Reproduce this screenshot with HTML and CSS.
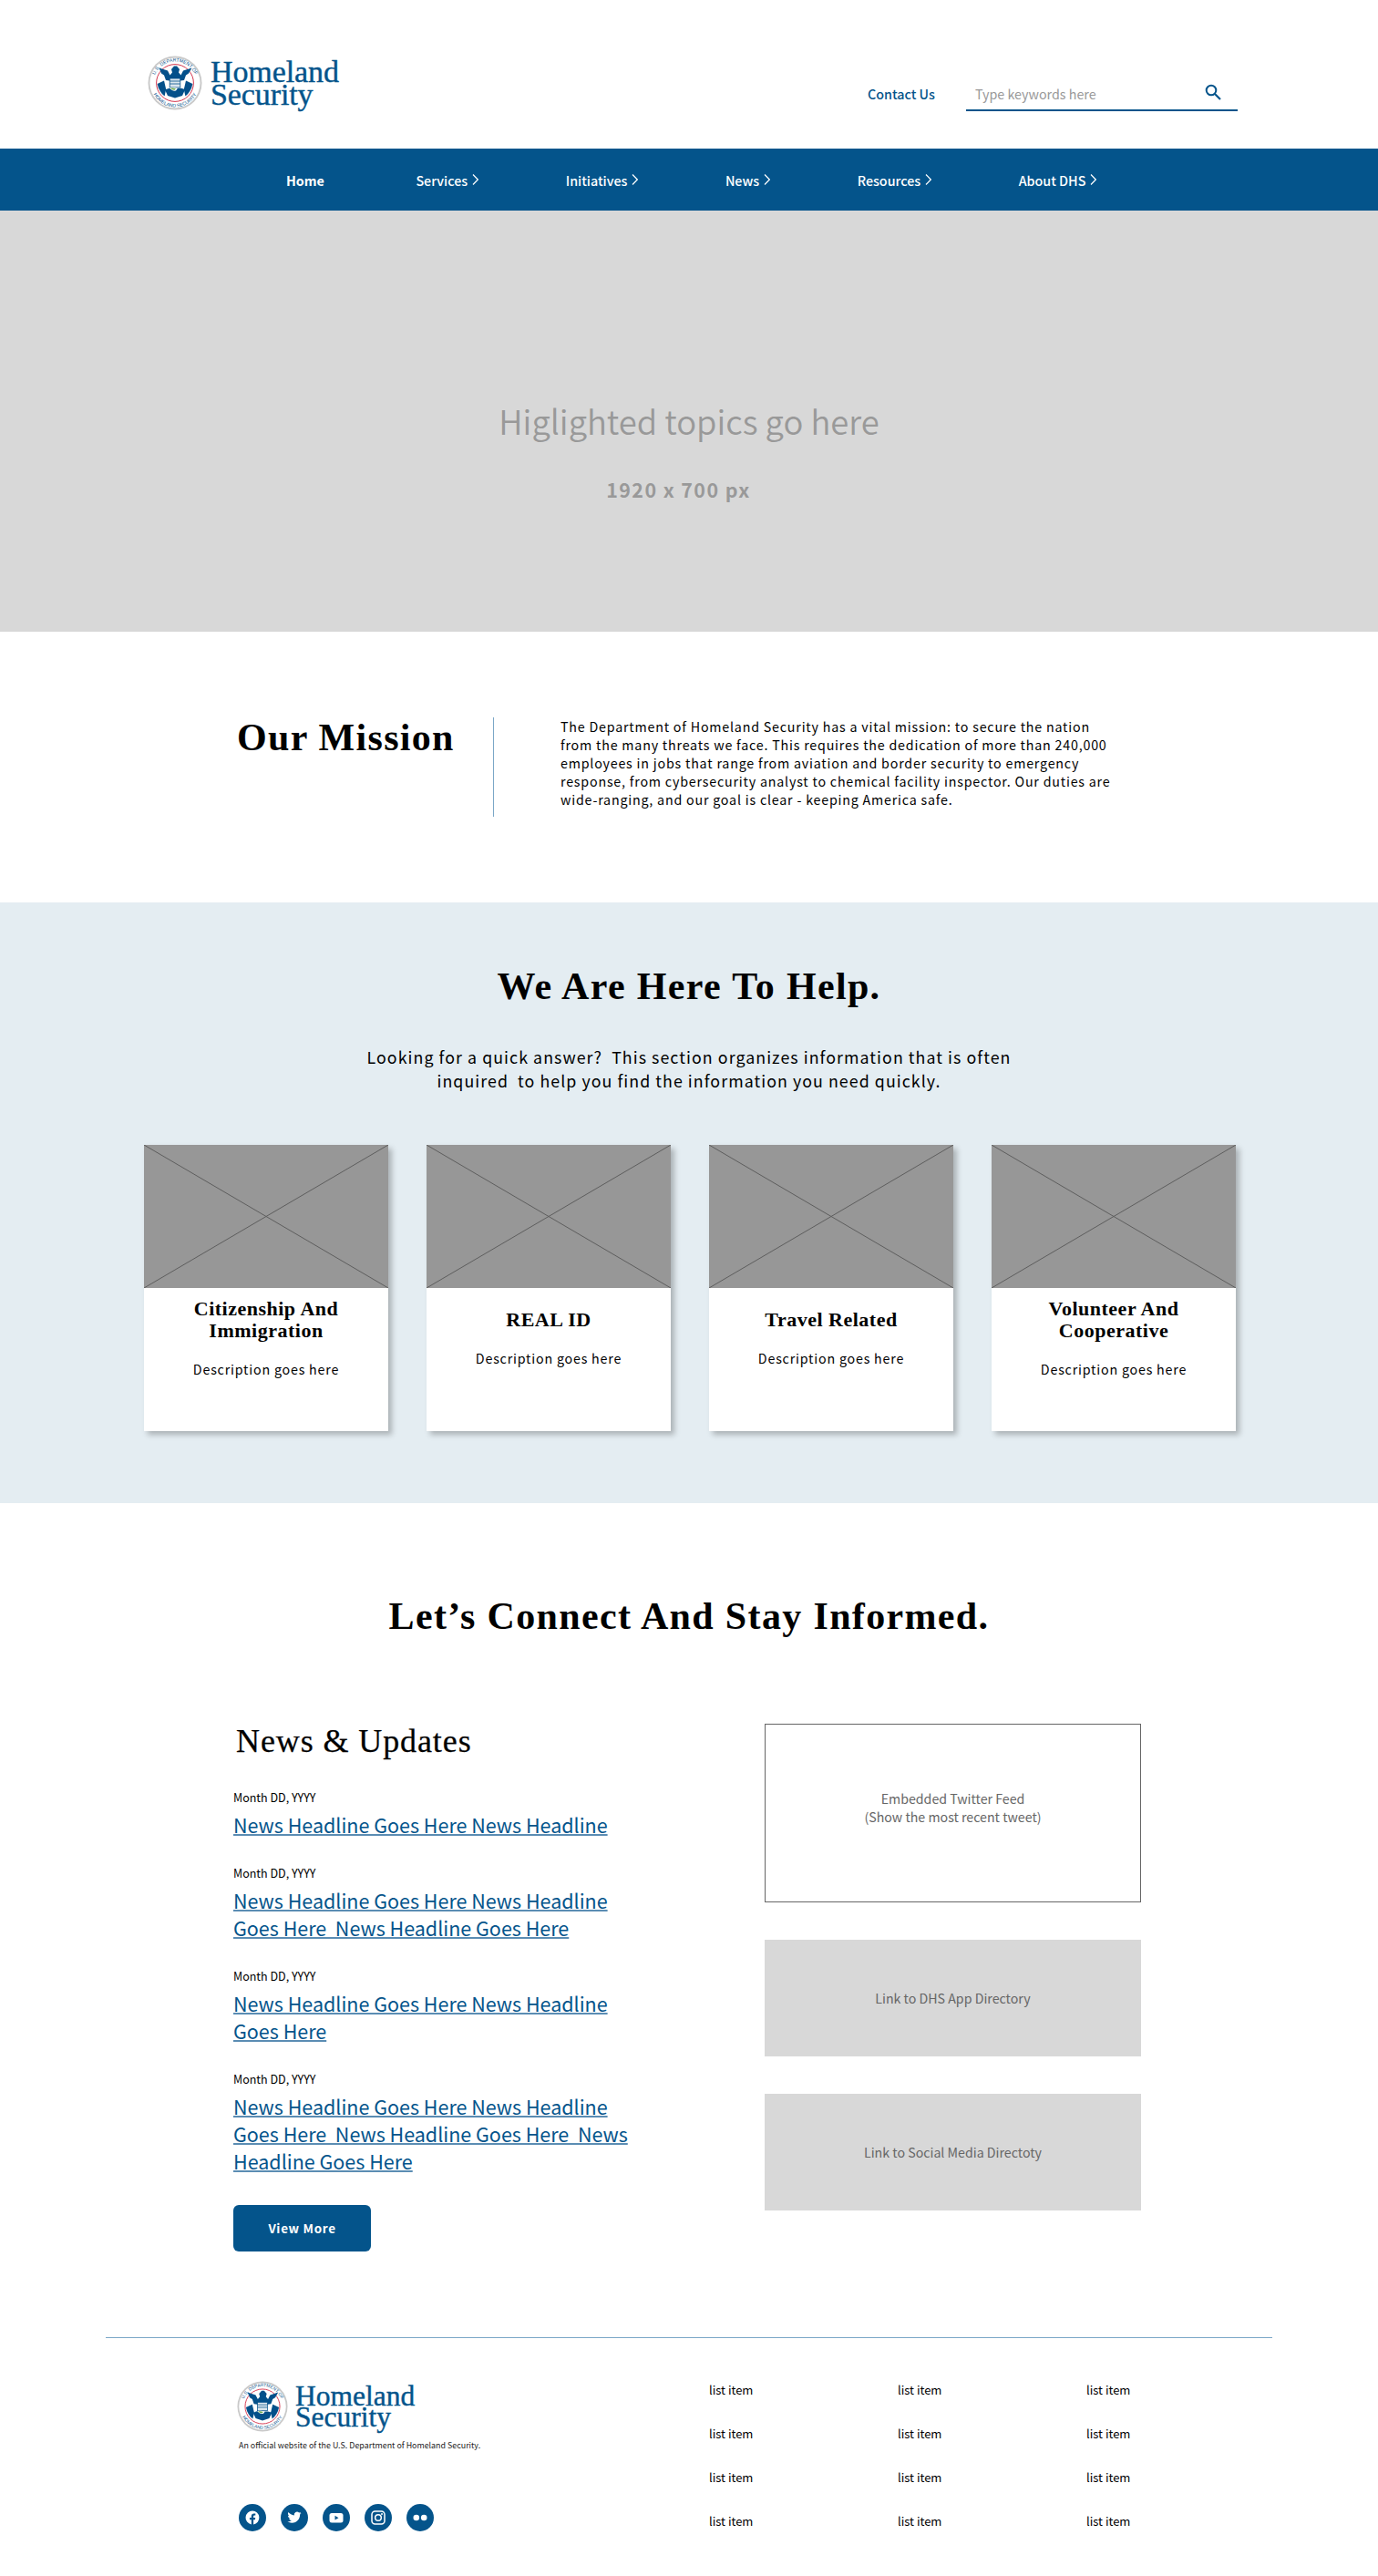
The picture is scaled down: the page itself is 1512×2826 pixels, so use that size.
FILE: index.html
```html
<!DOCTYPE html>
<html lang="en">
<head>
<meta charset="utf-8">
<title>Homeland Security</title>
<link rel="stylesheet" href="styles.css">
</head>
<body>
<svg class="defs" width="0" height="0" aria-hidden="true">
  <defs>
    <symbol id="seal" viewBox="0 0 60 60">
      <circle cx="30" cy="30" r="29.5" fill="#c9c9c9"/>
      <circle cx="30" cy="30" r="27.6" fill="#fff"/>
      <path id="sealTop" d="M6.5 30a23.5 23.5 0 0 1 47 0" fill="none"/>
      <path id="sealBot" d="M3.5 30a26.5 26.5 0 0 0 53 0" fill="none"/>
      <text class="seal-text"><textPath href="#sealTop" startOffset="50%" text-anchor="middle">U.S. DEPARTMENT OF</textPath></text>
      <text class="seal-text"><textPath href="#sealBot" startOffset="50%" text-anchor="middle">HOMELAND SECURITY</textPath></text>
      <circle cx="30" cy="30" r="20.4" fill="#fff" stroke="#d5364e" stroke-width="1"/>
      <path d="M10.6 31c1.2 6 4 10.500 8 13.400l1.600-7.400-2.200-9.500z" fill="#04508a"/>
      <path d="M49.400 31c-1.200 6-4 10.500-8 13.400l-1.600-7.400 2.200-9.500z" fill="#04508a"/>
      <path d="M12.500 13.500 22 16.500l2.500 5 2.500-3-1-3.500 3-3.500h3l3 3.500-1 3.500 2.500 3 2.500-5 9.500-3-3.500 6-3 2-2 5.500-4 .5H24l-4-.5-2-5.500-3-2z" fill="#04508a"/>
      <rect x="24.200" y="25" width="11.600" height="10" fill="#dbe6ee" stroke="#04508a" stroke-width=".8"/>
      <path d="M24.200 28h11.600M24.200 31h11.600" stroke="#04508a" stroke-width=".8"/>
      <path d="M19 37.500c5-3 8-1.500 11-1.500s7-1 11 1.500l-3 6.500-8 2.500-8-2.500z" fill="#04508a"/>
      <path d="M24 35.300c3.500-.8 6 .3 9 .5l-2 2.800c-3 .4-5.500-.8-7-3.300z" fill="#fff"/>
      <path d="M25 35.800c2-.4 4-.1 6 .5l-1.600 1.400c-1.900 0-3.200-.7-4.400-1.900z" fill="#6aa84f"/>
    </symbol>
  </defs>
</svg>

<header class="masthead">
  <a class="logo logo-top" href="#">
    <svg class="seal" aria-hidden="true"><use href="#seal"/></svg>
    <span class="wordmark"><span>Homeland</span><span>Security</span></span>
  </a>
  <div class="tools">
    <a class="contact" href="#">Contact Us</a>
    <div class="search">
      <span class="placeholder">Type keywords here</span>
      <svg class="search-icon" viewBox="0 0 18 18" aria-hidden="true"><circle cx="7" cy="7" r="5.300" fill="none" stroke="#04548b" stroke-width="2"/><path d="M11 11l6 6" stroke="#04548b" stroke-width="2.200" fill="none"/></svg>
    </div>
  </div>
</header>

<nav class="mainnav">
  <a class="nav-home" href="#">Home</a>
  <a href="#">Services<svg class="chev" viewBox="0 0 7 12" aria-hidden="true"><path d="M1 .5 6.300 6 1 11.500"/></svg></a>
  <a href="#">Initiatives<svg class="chev" viewBox="0 0 7 12" aria-hidden="true"><path d="M1 .5 6.300 6 1 11.500"/></svg></a>
  <a href="#">News<svg class="chev" viewBox="0 0 7 12" aria-hidden="true"><path d="M1 .5 6.300 6 1 11.500"/></svg></a>
  <a href="#">Resources<svg class="chev" viewBox="0 0 7 12" aria-hidden="true"><path d="M1 .5 6.300 6 1 11.500"/></svg></a>
  <a href="#">About DHS<svg class="chev" viewBox="0 0 7 12" aria-hidden="true"><path d="M1 .5 6.300 6 1 11.500"/></svg></a>
</nav>

<section class="hero">
  <h2 class="hero-title">Higlighted topics go here</h2>
  <p class="hero-size">1920 x 700 px</p>
</section>

<section class="mission">
  <h2 class="mission-title">Our Mission</h2>
  <p class="mission-text">The Department of Homeland Security has a vital mission: to secure the nation from the many threats we face. This requires the dedication of more than 240,000 employees in jobs that range from aviation and border security to emergency response, from cybersecurity analyst to chemical facility inspector. Our duties are wide-ranging, and our goal is clear - keeping America safe.</p>
</section>

<section class="help">
  <h2 class="section-title">We Are Here To Help.</h2>
  <p class="help-intro">Looking for a quick answer?&nbsp; This section organizes information that is often<br>inquired&nbsp; to help you find the information you need quickly.</p>
  <div class="cards">
    <article class="card">
      <svg class="card-img" viewBox="0 0 268 157" preserveAspectRatio="none" aria-hidden="true"><path d="M0 0l268 157M268 0L0 157"/></svg>
      <div class="card-body card-body-two"><h3>Citizenship And Immigration</h3><p>Description goes here</p></div>
    </article>
    <article class="card">
      <svg class="card-img" viewBox="0 0 268 157" preserveAspectRatio="none" aria-hidden="true"><path d="M0 0l268 157M268 0L0 157"/></svg>
      <div class="card-body"><h3>REAL ID</h3><p>Description goes here</p></div>
    </article>
    <article class="card">
      <svg class="card-img" viewBox="0 0 268 157" preserveAspectRatio="none" aria-hidden="true"><path d="M0 0l268 157M268 0L0 157"/></svg>
      <div class="card-body"><h3>Travel Related</h3><p>Description goes here</p></div>
    </article>
    <article class="card">
      <svg class="card-img" viewBox="0 0 268 157" preserveAspectRatio="none" aria-hidden="true"><path d="M0 0l268 157M268 0L0 157"/></svg>
      <div class="card-body card-body-two"><h3>Volunteer And Cooperative</h3><p>Description goes here</p></div>
    </article>
  </div>
</section>

<section class="connect">
  <h2 class="section-title">Let’s Connect And Stay Informed.</h2>
  <div class="connect-cols">
    <div class="news">
      <h3 class="news-title">News &amp; Updates</h3>
      <div class="news-item"><p class="news-date">Month DD, YYYY</p><a href="#">News Headline Goes Here News Headline</a></div>
      <div class="news-item"><p class="news-date">Month DD, YYYY</p><a href="#">News Headline Goes Here News Headline Goes Here&nbsp; News Headline Goes Here</a></div>
      <div class="news-item"><p class="news-date">Month DD, YYYY</p><a href="#">News Headline Goes Here News Headline Goes Here</a></div>
      <div class="news-item"><p class="news-date">Month DD, YYYY</p><a href="#">News Headline Goes Here News Headline Goes Here&nbsp; News Headline Goes Here&nbsp; News Headline Goes Here</a></div>
      <a class="btn" href="#">View More</a>
    </div>
    <div class="side">
      <div class="side-box side-outline">Embedded Twitter Feed<br>(Show the most recent tweet)</div>
      <div class="side-box side-fill">Link to DHS App Directory</div>
      <div class="side-box side-fill">Link to Social Media Directoty</div>
    </div>
  </div>
</section>

<footer class="footer">
  <div class="footer-left">
    <a class="logo logo-foot" href="#">
      <svg class="seal" aria-hidden="true"><use href="#seal"/></svg>
      <span class="wordmark"><span>Homeland</span><span>Security</span></span>
    </a>
    <p class="official">An official website of the U.S. Department of Homeland Security.</p>
    <div class="social">
      <a href="#" aria-label="Facebook"><svg viewBox="0 0 30 30"><circle cx="15" cy="15" r="15" fill="#04548b"/><path fill="#fff" d="M15 7.500a7.500 7.500 0 0 0-1.200 14.900v-5.200h-1.900V15h1.900v-1.700c0-1.900 1.100-2.900 2.800-2.900.8 0 1.700.1 1.700.1v1.900h-1c-.9 0-1.200.6-1.200 1.200V15h2.100l-.3 2.200H16.100v5.200A7.500 7.500 0 0 0 15 7.500z"/></svg></a>
      <a href="#" aria-label="Twitter"><svg viewBox="0 0 30 30"><circle cx="15" cy="15" r="15" fill="#04548b"/><path fill="#fff" d="M22.500 10c-.6.300-1.200.4-1.800.5.600-.4 1.100-1 1.400-1.700-.6.400-1.300.6-2 .8a3.100 3.100 0 0 0-5.300 2.800c-2.600-.1-4.900-1.400-6.400-3.300-.8 1.400-.4 3.200 1 4.100-.5 0-1-.2-1.400-.4 0 1.500 1.100 2.800 2.500 3.100-.5.100-.9.100-1.400 0 .4 1.200 1.500 2.100 2.900 2.100-1.300 1-2.900 1.500-4.600 1.300 1.400.9 3.100 1.400 4.800 1.400 5.800 0 9.100-4.900 8.900-9.300.6-.4 1.100-.9 1.400-1.400z"/></svg></a>
      <a href="#" aria-label="YouTube"><svg viewBox="0 0 30 30"><circle cx="15" cy="15" r="15" fill="#04548b"/><rect x="7.500" y="10" width="15" height="10.400" rx="2.500" fill="#fff"/><path d="M13.500 12.800v4.800l4-2.400z" fill="#04548b"/></svg></a>
      <a href="#" aria-label="Instagram"><svg viewBox="0 0 30 30"><circle cx="15" cy="15" r="15" fill="#04548b"/><rect x="8" y="8" width="14" height="14" rx="3.500" fill="none" stroke="#fff" stroke-width="1.500"/><circle cx="15" cy="15" r="3.300" fill="none" stroke="#fff" stroke-width="1.500"/><circle cx="19" cy="11" r="1" fill="#fff"/></svg></a>
      <a href="#" aria-label="Flickr"><svg viewBox="0 0 30 30"><circle cx="15" cy="15" r="15" fill="#04548b"/><circle cx="10.800" cy="15" r="3.300" fill="#fff"/><circle cx="19.200" cy="15" r="3.300" fill="#fff"/></svg></a>
    </div>
  </div>
  <ul class="footer-links">
    <li>list item</li><li>list item</li><li>list item</li>
    <li>list item</li><li>list item</li><li>list item</li>
    <li>list item</li><li>list item</li><li>list item</li>
    <li>list item</li><li>list item</li><li>list item</li>
  </ul>
</footer>
</body>
</html>
```

FILE: styles.css
```css
* { box-sizing: border-box; }
html, body { margin: 0; padding: 0; }
body {
  width: 1512px;
  font-family: "Noto Sans CJK SC", "Noto Sans", sans-serif;
  color: #000;
  background: #fff;
  overflow-x: hidden;
}
h2, h3, p, ul { margin: 0; padding: 0; }
a { color: inherit; text-decoration: none; }
.defs { position: absolute; }
.seal-text { font-family: "Liberation Sans", sans-serif; font-size: 5.200px; fill: #04508a; }

.masthead {
  height: 163px;
  display: flex;
  justify-content: space-between;
  padding: 61px 154px 0 162px;
}
.logo { display: flex; align-items: center; }
.logo-top { height: 60px; gap: 9px; }
.logo-top .seal { width: 60px; height: 60px; }
.wordmark {
  display: flex;
  flex-direction: column;
  font-family: "Liberation Serif", serif;
  color: #04548b;
  -webkit-text-stroke: .4px #04548b;
}
.logo-top .wordmark { font-size: 34px; line-height: 25px; letter-spacing: -.1px; }
.tools { display: flex; height: 62px; align-items: flex-start; padding-top: 23px; }
.contact { width: 108px; font-size: 14.300px; line-height: 38px; font-weight: 500; color: #04548b; }
.search {
  width: 298px;
  height: 38px;
  border-bottom: 2px solid #04548b;
  display: flex;
  align-items: center;
  justify-content: space-between;
  padding: 0 18px 0 10px;
}
.placeholder { font-size: 14.300px; color: #999; }
.search-icon { width: 18px; height: 18px; margin-bottom: 2px; }

.mainnav {
  height: 68px;
  background: #04548b;
  color: #fff;
  display: flex;
  align-items: center;
  padding-left: 314px;
  gap: 95.500px;
  font-size: 14.300px;
  font-weight: 500;
}
.mainnav a { display: flex; align-items: center; gap: 5px; }
.nav-home { font-weight: 700; margin-right: 5px; }
.chev { width: 7px; height: 12px; fill: none; stroke: #fff; stroke-width: 1.200; }

.hero {
  height: 462px;
  background: #d8d8d8;
  display: flex;
  flex-direction: column;
  align-items: center;
  padding-top: 200px;
}
.hero-title { font-size: 36.400px; line-height: 60px; font-weight: 350; color: #999; }
.hero-size {
  margin-top: 31px;
  margin-right: 23px;
  font-size: 21.400px;
  line-height: 30px;
  font-weight: 700;
  letter-spacing: 1.400px;
  color: #999;
}

.mission {
  height: 297px;
  display: flex;
  padding: 94px 0 0 260px;
}
.mission-title {
  width: 282px;
  height: 109px;
  border-right: 1px solid #7ba7c7;
  font-family: "Liberation Serif", serif;
  font-size: 42px;
  line-height: 44px;
  font-weight: 700;
  letter-spacing: 1.300px;
}
.mission-text {
  width: 616px;
  margin-left: 73px;
  font-size: 14.250px;
  line-height: 20px;
  letter-spacing: .8px;
}

.help {
  height: 659px;
  background: #e4edf2;
  padding-top: 68px;
  text-align: center;
}
.section-title {
  font-family: "Liberation Serif", serif;
  font-size: 42px;
  line-height: 48px;
  font-weight: 700;
  letter-spacing: 1.350px;
}
.help-intro { margin-top: 40px; font-size: 17.800px; line-height: 26px; letter-spacing: 1.060px; }
.cards { display: flex; gap: 42px; margin: 58px 0 0 158px; }
.card { width: 268px; height: 314px; background: #fff; box-shadow: 4px 4px 6px rgba(0, 0, 0, .25); }
.card-img { display: block; width: 268px; height: 157px; background: #979797; }
.card-img path { stroke: #5e5e5e; stroke-width: 1; fill: none; }
.card-body { padding: 23px 16px 0; }
.card-body-two { padding-top: 11px; }
.card-body h3 {
  font-family: "Liberation Serif", serif;
  font-size: 22px;
  line-height: 24px;
  font-weight: 700;
  letter-spacing: .5px;
}
.card-body p { margin-top: 18px; font-size: 14.250px; line-height: 24px; letter-spacing: .8px; }

.connect { height: 915px; padding-top: 100px; text-align: left; }
.connect .section-title { text-align: center; }
.connect-cols { display: flex; margin-top: 94px; padding-left: 256px; }
.news { width: 583px; }
.news-title {
  margin: 0 0 32px 3px;
  font-family: "Liberation Serif", serif;
  font-size: 36px;
  line-height: 38px;
  font-weight: 400;
  letter-spacing: .9px;
  -webkit-text-stroke: .25px #000;
}
.news-item { width: 440px; margin-top: 27px; }
.news-date { font-size: 12.500px; line-height: 22px; margin-bottom: 4px; }
.news-item a {
  display: block;
  font-size: 21.500px;
  line-height: 30px;
  color: #04548b;
  text-decoration: underline;
  text-decoration-thickness: 2px;
  text-decoration-color: #5b8db3;
}
.btn {
  display: block;
  width: 151px;
  height: 51px;
  margin-top: 33px;
  background: #04548b;
  border-radius: 6px;
  color: #fff;
  font-size: 13.400px;
  line-height: 51px;
  font-weight: 700;
  letter-spacing: .7px;
  text-align: center;
}
.side { width: 413px; display: flex; flex-direction: column; gap: 41px; }
.side-box { display: flex; align-items: center; justify-content: center; text-align: center; font-size: 14.200px; line-height: 20px; color: #666; }
.side-outline { height: 196px; border: 1px solid #666; padding-bottom: 13px; }
.side-fill { height: 128px; background: #d8d8d8; }

.footer {
  width: 1280px;
  height: 262px;
  margin-left: 116px;
  border-top: 1px solid #7ba7c7;
  display: flex;
  padding-top: 47px;
}
.footer-left { flex: none; width: 662px; padding-left: 146px; }
.logo-foot { height: 56px; gap: 8px; }
.logo-foot .seal { width: 56px; height: 56px; margin-left: -2px; }
.logo-foot .wordmark { font-size: 31.500px; line-height: 23px; }
.official { margin-top: 7px; font-size: 8.900px; line-height: 16px; color: #222; }
.social { display: flex; gap: 16px; margin-top: 56px; }
.social a { display: block; width: 30px; height: 30px; }
.social svg { display: block; width: 30px; height: 30px; }
.footer-links {
  flex: none;
  list-style: none;
  display: grid;
  grid-template-columns: repeat(3, 207px);
  grid-auto-rows: 48px;
  font-size: 13px;
  line-height: 22px;
  margin-top: -1px;
}
```
